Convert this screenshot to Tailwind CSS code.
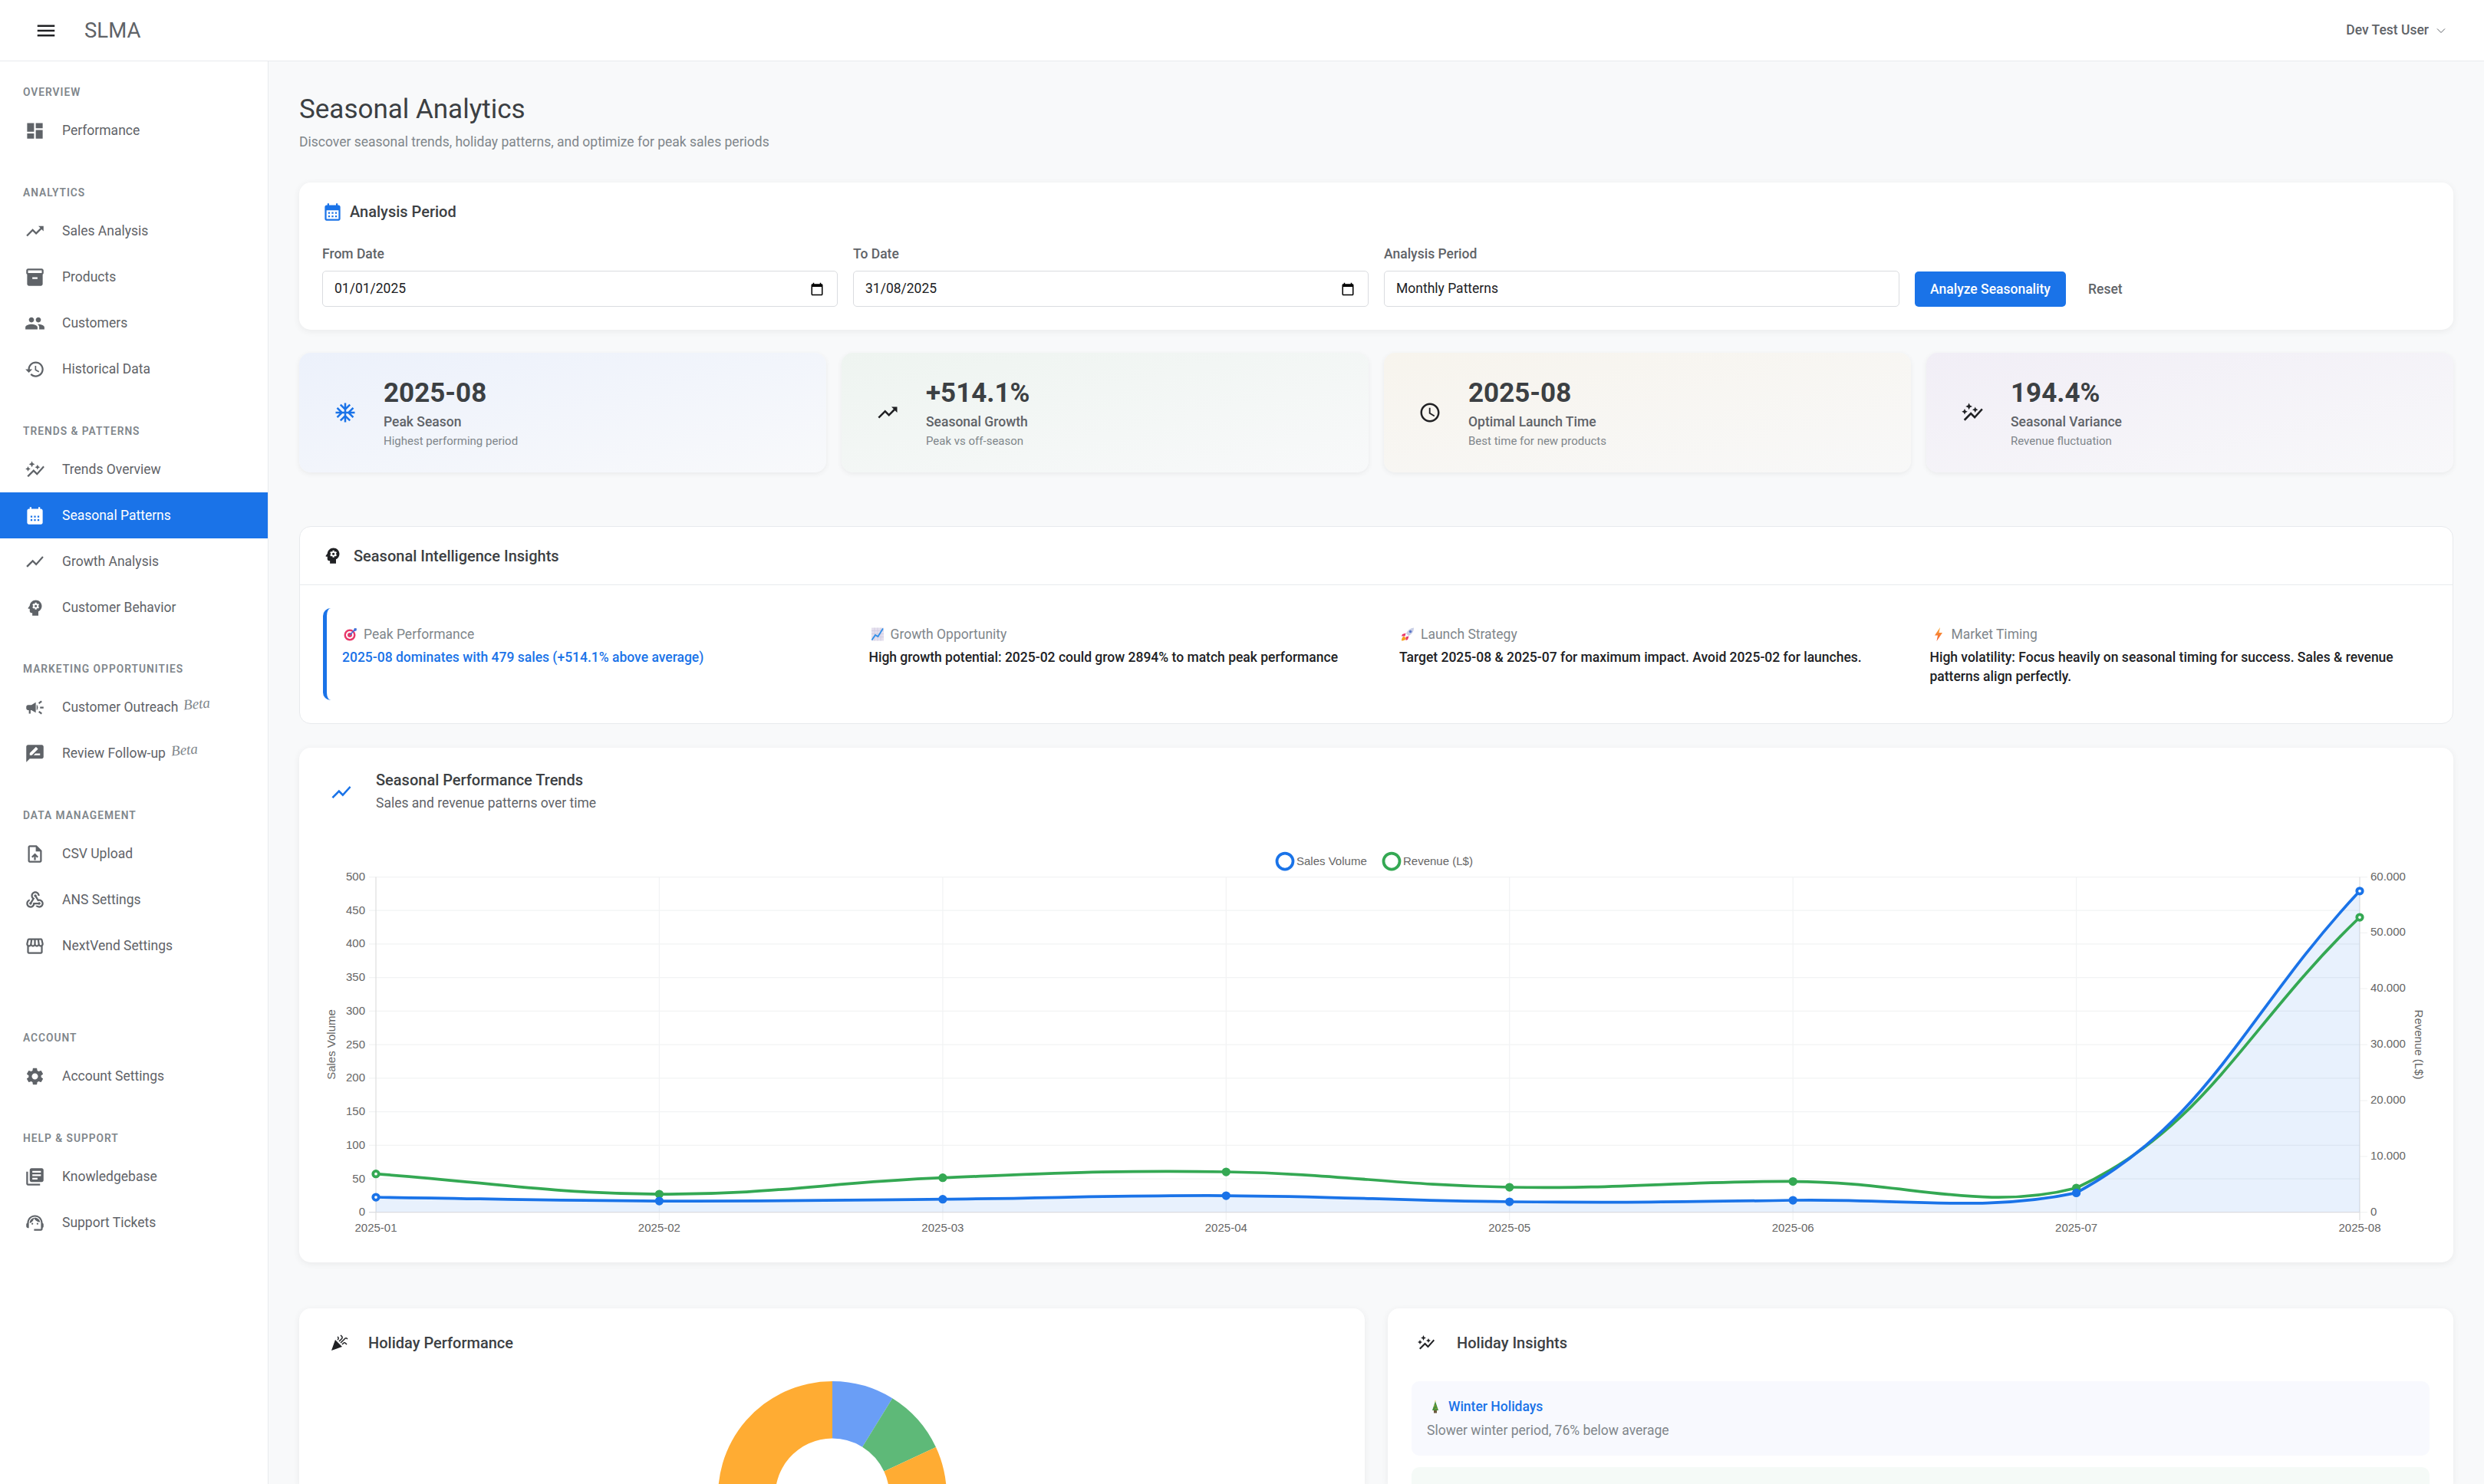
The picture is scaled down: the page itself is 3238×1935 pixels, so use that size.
<!DOCTYPE html>
<html lang="en">
<head>
<meta charset="UTF-8">
<title>SLMA - Seasonal Analytics</title>
<script src="https://cdn.jsdelivr.net/npm/@tailwindcss/browser@4"></script>
</head>
<body class="h-[1935px] overflow-hidden bg-[#f8f9fa] [font-family:Roboto,sans-serif]">

<header class="flex h-[80px] items-center justify-between border-b border-[#e8eaed] bg-white pr-[50px] pl-[45px]">
  <div class="flex items-center gap-[35px]">
    <svg class="h-[30px] w-[30px] text-[#202124]" viewBox="0 0 24 24" fill="currentColor"><path d="M3 18h18v-2H3v2zm0-5h18v-2H3v2zm0-7v2h18V6H3z"/></svg>
    <span class="text-[27.5px] text-[#5f6368]">SLMA</span>
  </div>
  <div class="flex items-center gap-[10px] text-[17.5px] font-medium text-[#5f6368]">
    Dev Test User
    <svg class="h-3 w-3" viewBox="0 0 12 12" fill="none" stroke="currentColor" stroke-width="1"><path d="M1 3.5l5 5 5-5"/></svg>
  </div>
</header>

<div class="flex h-[1855px] overflow-hidden">
  <aside class="h-[1855px] w-[350px] shrink-0 border-r border-[#e8eaed] bg-white pt-5">
    <section>
      <h6 class="flex h-10 items-center pl-[30px] text-[13.75px] font-semibold tracking-[1px] text-[#80868b] uppercase">Overview</h6>
      <a class="flex h-[60px] items-center gap-[22px] pl-[32px] text-[17.5px] text-[#5f6368]"><svg class="h-[27px] w-[27px]" viewBox="0 0 24 24" fill="currentColor"><path d="M3 13h8V3H3v10zm0 8h8v-6H3v6zm10 0h8V11h-8v10zm0-18v6h8V3h-8z"/></svg>Performance</a>
    </section>
    <section class="mt-[31px]">
      <h6 class="flex h-10 items-center pl-[30px] text-[13.75px] font-semibold tracking-[1px] text-[#80868b] uppercase">Analytics</h6>
      <a class="flex h-[60px] items-center gap-[22px] pl-[32px] text-[17.5px] text-[#5f6368]"><svg class="h-[27px] w-[27px]" viewBox="0 0 24 24" fill="currentColor"><path d="M16 6l2.29 2.29-4.88 4.88-4-4L2 16.59 3.41 18l6-6 4 4 6.3-6.29L22 12V6z"/></svg>Sales Analysis</a>
      <a class="flex h-[60px] items-center gap-[22px] pl-[32px] text-[17.5px] text-[#5f6368]"><svg class="h-[27px] w-[27px]" viewBox="0 0 24 24" fill="currentColor"><path d="M20 2H4c-1 0-2 .9-2 2v3.01c0 .72.43 1.34 1 1.69V20c0 1.1 1.1 2 2 2h14c.9 0 2-.9 2-2V8.7c.57-.35 1-.97 1-1.69V4c0-1.1-1-2-2-2zm-5 12H9v-2h6v2zm5-7H4V4l16-.02V7z"/></svg>Products</a>
      <a class="flex h-[60px] items-center gap-[22px] pl-[32px] text-[17.5px] text-[#5f6368]"><svg class="h-[27px] w-[27px]" viewBox="0 0 24 24" fill="currentColor"><path d="M16 11c1.66 0 2.99-1.34 2.99-3S17.66 5 16 5c-1.66 0-3 1.34-3 3s1.34 3 3 3zm-8 0c1.66 0 2.99-1.34 2.99-3S9.66 5 8 5C6.34 5 5 6.34 5 8s1.34 3 3 3zm0 2c-2.33 0-7 1.17-7 3.5V19h14v-2.5c0-2.33-4.67-3.5-7-3.5zm8 0c-.29 0-.62.02-.97.05 1.16.84 1.97 1.97 1.97 3.45V19h6v-2.5c0-2.33-4.67-3.5-7-3.5z"/></svg>Customers</a>
      <a class="flex h-[60px] items-center gap-[22px] pl-[32px] text-[17.5px] text-[#5f6368]"><svg class="h-[27px] w-[27px]" viewBox="0 0 24 24" fill="currentColor"><path d="M13 3c-4.97 0-9 4.03-9 9H1l3.89 3.89.07.14L9 12H6c0-3.87 3.13-7 7-7s7 3.13 7 7-3.13 7-7 7c-1.93 0-3.68-.79-4.94-2.06l-1.42 1.42C8.27 19.99 10.51 21 13 21c4.97 0 9-4.03 9-9s-4.03-9-9-9zm-1 5v5l4.28 2.54.72-1.21-3.5-2.08V8H12z"/></svg>Historical Data</a>
    </section>
    <section class="mt-[31px]">
      <h6 class="flex h-10 items-center pl-[30px] text-[13.75px] font-semibold tracking-[1px] text-[#80868b] uppercase">Trends &amp; Patterns</h6>
      <a class="flex h-[60px] items-center gap-[22px] pl-[32px] text-[17.5px] text-[#5f6368]"><svg class="h-[27px] w-[27px]" viewBox="0 0 24 24" fill="currentColor"><path d="M14.06 9.94 12 9l2.06-.94L15 6l.94 2.06L18 9l-2.06.94L15 12zM4 14l.94-2.06L7 11l-2.06-.94L4 8l-.94 2.06L1 11l2.06.94zm4.5-5 1.09-2.41L12 5.5 9.59 4.41 8.5 2 7.41 4.41 5 5.5l2.41 1.09zm-4 11.5 6-6.01 4 4L23 8.93l-1.41-1.41-7.09 7.97-4-4L3 19z"/></svg>Trends Overview</a>
      <a class="flex h-[60px] items-center gap-[22px] bg-[#1a73e8] pl-[32px] text-[17.5px] text-white"><svg class="h-[27px] w-[27px]" viewBox="0 0 24 24" fill="currentColor"><path fill-rule="evenodd" d="M19 4h-1V2h-2v2H8V2H6v2H5c-1.11 0-1.99.9-1.99 2L3 20c0 1.1.89 2 2 2h14c1.1 0 2-.9 2-2V6c0-1.1-.9-2-2-2zM9 14H7v-2h2v2zm4 0h-2v-2h2v2zm4 0h-2v-2h2v2zm-8 4H7v-2h2v2zm4 0h-2v-2h2v2zm4 0h-2v-2h2v2z"/></svg>Seasonal Patterns</a>
      <a class="flex h-[60px] items-center gap-[22px] pl-[32px] text-[17.5px] text-[#5f6368]"><svg class="h-[27px] w-[27px]" viewBox="0 0 24 24" fill="currentColor"><path d="M3.5 18.49l6-6.01 4 4L22 6.92l-1.41-1.41-7.09 7.97-4-4L2 16.99z"/></svg>Growth Analysis</a>
      <a class="flex h-[60px] items-center gap-[22px] pl-[32px] text-[17.5px] text-[#5f6368]"><svg class="h-[27px] w-[27px]" viewBox="0 0 24 24" fill="currentColor"><path d="M13 8.57c-.79 0-1.43.64-1.43 1.43s.64 1.43 1.43 1.43 1.43-.64 1.43-1.43-.64-1.43-1.43-1.43z"/><path d="M13 3C9.25 3 6.2 5.94 6.02 9.64L4.1 12.2c-.25.33-.01.8.4.8H6v3c0 1.1.9 2 2 2h1v3h7v-4.68c2.36-1.12 4-3.53 4-6.32 0-3.87-3.13-7-7-7zm3 7c0 .13-.01.26-.02.39l.83.66c.08.06.1.16.05.25l-.8 1.39c-.05.09-.16.12-.24.09l-.99-.4c-.21.16-.43.29-.67.39L14 13.83c-.01.1-.1.17-.2.17h-1.6c-.1 0-.18-.07-.2-.17l-.15-1.06c-.25-.1-.47-.23-.68-.39l-.99.4c-.09.03-.2 0-.25-.09l-.8-1.39c-.05-.08-.03-.19.05-.25l.84-.66c-.01-.13-.02-.26-.02-.39s.02-.27.04-.39l-.85-.66c-.08-.06-.1-.16-.05-.26l.8-1.38c.05-.09.15-.12.24-.09l1 .4c.2-.15.43-.29.67-.39L12 6.17c.02-.1.1-.17.2-.17h1.6c.1 0 .18.07.2.17l.15 1.06c.24.1.46.23.67.39l1-.4c.09-.03.2 0 .24.09l.8 1.38c.05.09.03.2-.05.26l-.85.66c.03.12.04.25.04.39z"/></svg>Customer Behavior</a>
    </section>
    <section class="mt-[30px]">
      <h6 class="flex h-10 items-center pl-[30px] text-[13.75px] font-semibold tracking-[1px] text-[#80868b] uppercase">Marketing Opportunities</h6>
      <a class="flex h-[60px] items-center gap-[22px] pl-[32px] text-[17.5px] text-[#5f6368]"><svg class="h-[27px] w-[27px]" viewBox="0 0 24 24" fill="currentColor"><path d="M18 11v2h4v-2h-4zm-2 6.61c.96.71 2.21 1.65 3.2 2.39.4-.53.8-1.07 1.2-1.6-.99-.74-2.24-1.68-3.2-2.4-.4.54-.8 1.08-1.2 1.61zM20.4 5.6c-.4-.53-.8-1.07-1.2-1.6-.99.74-2.24 1.68-3.2 2.4.4.53.8 1.07 1.2 1.6.96-.72 2.21-1.65 3.2-2.4zM4 9c-1.1 0-2 .9-2 2v2c0 1.1.9 2 2 2h1v4h2v-4h1l5 3V6L8 9H4zm11.5 3c0-1.33-.58-2.53-1.5-3.35v6.69c.92-.81 1.5-2.01 1.5-3.34z"/></svg><span>Customer Outreach<span class="relative -top-[4px] ml-[7px] inline-block -rotate-[5deg] text-[19px] text-[#80868b] italic [font-family:'Liberation_Serif',serif]">Beta</span></span></a>
      <a class="flex h-[60px] items-center gap-[22px] pl-[32px] text-[17.5px] text-[#5f6368]"><svg class="h-[27px] w-[27px]" viewBox="0 0 24 24" fill="currentColor"><path d="M20 2H4c-1.1 0-2 .9-2 2v18l4-4h14c1.1 0 2-.9 2-2V4c0-1.1-.9-2-2-2zM6 14v-2.47l6.88-6.88c.2-.2.51-.2.71 0l1.77 1.77c.2.2.2.51 0 .71L8.47 14H6zm12 0h-7.5l2-2H18v2z"/></svg><span>Review Follow-up<span class="relative -top-[4px] ml-[7px] inline-block -rotate-[5deg] text-[19px] text-[#80868b] italic [font-family:'Liberation_Serif',serif]">Beta</span></span></a>
    </section>
    <section class="mt-[31px]">
      <h6 class="flex h-10 items-center pl-[30px] text-[13.75px] font-semibold tracking-[1px] text-[#80868b] uppercase">Data Management</h6>
      <a class="flex h-[60px] items-center gap-[22px] pl-[32px] text-[17.5px] text-[#5f6368]"><svg class="h-[27px] w-[27px]" viewBox="0 0 24 24" fill="currentColor"><path d="M14 2H6c-1.1 0-1.99.9-1.99 2L4 20c0 1.1.89 2 1.99 2H18c1.1 0 2-.9 2-2V8l-6-6zm4 18H6V4h7v5h5v11zM8 15.01l1.41 1.41L11 14.84V19h2v-4.16l1.59 1.59L16 15.01 12.01 11 8 15.01z"/></svg>CSV Upload</a>
      <a class="flex h-[60px] items-center gap-[22px] pl-[32px] text-[17.5px] text-[#5f6368]"><svg class="h-[27px] w-[27px]" viewBox="0 0 24 24" fill="currentColor"><path d="M10 15l5.88 0c.27-.31.67-.5 1.12-.5.83 0 1.5.67 1.5 1.5s-.67 1.5-1.5 1.5c-.44 0-.84-.19-1.12-.5l-3.98 0c-.46 2.28-2.48 4-4.9 4C4.24 21 2 18.76 2 16c0-2.42 1.72-4.44 4-4.9l0 2.07C4.84 13.58 4 14.7 4 16c0 1.65 1.35 3 3 3S10 17.65 10 15zM12.5 4c1.65 0 3 1.35 3 3h2c0-2.76-2.24-5-5-5l0 0c-2.76 0-5 2.24-5 5 0 1.43.6 2.71 1.55 3.62l-2.35 3.9C6.02 14.66 5.5 15.26 5.5 16c0 .83.67 1.5 1.5 1.5s1.5-.67 1.5-1.5c0-.16-.02-.31-.07-.45l3.38-5.63C10.49 9.61 9.5 8.42 9.5 7 9.5 5.35 10.85 4 12.5 4zM17 13c-.64 0-1.23.2-1.72.54l-3.05-5.07C11.53 8.35 11 7.74 11 7c0-.83.67-1.5 1.5-1.5S14 6.17 14 7c0 .15-.02.29-.06.43l2.19 3.65C16.41 11.03 16.7 11 17 11l0 0c2.76 0 5 2.24 5 5 0 2.76-2.24 5-5 5-1.85 0-3.47-1.01-4.33-2.5l2.67 0C15.82 18.82 16.39 19 17 19c1.65 0 3-1.35 3-3S18.65 13 17 13z"/></svg>ANS Settings</a>
      <a class="flex h-[60px] items-center gap-[22px] pl-[32px] text-[17.5px] text-[#5f6368]"><svg class="h-[27px] w-[27px]" viewBox="0 0 24 24" fill="currentColor"><path d="M21.9 8.89l-1.05-4.37c-.22-.9-1-1.52-1.91-1.52H5.05c-.9 0-1.69.63-1.9 1.52L2.1 8.89c-.24 1.02-.02 2.06.62 2.88.08.11.19.19.28.29V19c0 1.1.9 2 2 2h14c1.1 0 2-.9 2-2v-6.94c.09-.09.2-.18.28-.28.64-.82.87-1.87.62-2.89zm-2.99-3.9l1.05 4.37c.1.42.01.84-.25 1.17-.14.18-.44.47-.94.47-.61 0-1.14-.49-1.21-1.14L16.98 5l1.93-.01zM13 5h1.96l.54 4.52c.05.39-.07.78-.33 1.07-.22.26-.54.41-.95.41-.67 0-1.22-.59-1.22-1.31V5zM8.49 9.52L9.04 5H11v4.69c0 .72-.55 1.31-1.29 1.31-.34 0-.65-.15-.89-.41-.25-.29-.37-.68-.33-1.07zm-4.45-.16L5.05 5h1.97l-.58 4.86c-.08.65-.6 1.14-1.21 1.14-.49 0-.8-.29-.93-.47-.27-.32-.36-.75-.26-1.17zM5 19v-6.03c.08.01.15.03.23.03.87 0 1.66-.36 2.24-.95.6.6 1.4.95 2.31.95.87 0 1.65-.36 2.23-.93.59.57 1.39.93 2.29.93.84 0 1.64-.35 2.24-.95.58.59 1.37.95 2.24.95.08 0 .15-.02.23-.03V19H5z"/></svg>NextVend Settings</a>
    </section>
    <section class="mt-[70px]">
      <h6 class="flex h-10 items-center pl-[30px] text-[13.75px] font-semibold tracking-[1px] text-[#80868b] uppercase">Account</h6>
      <a class="flex h-[60px] items-center gap-[22px] pl-[32px] text-[17.5px] text-[#5f6368]"><svg class="h-[27px] w-[27px]" viewBox="0 0 24 24" fill="currentColor"><path d="M19.14 12.94c.04-.3.06-.61.06-.94 0-.32-.02-.64-.07-.94l2.03-1.58c.18-.14.23-.41.12-.61l-1.92-3.32c-.12-.22-.37-.29-.59-.22l-2.39.96c-.5-.38-1.03-.7-1.62-.94l-.36-2.54c-.04-.24-.24-.41-.48-.41h-3.84c-.24 0-.43.17-.47.41l-.36 2.54c-.59.24-1.13.57-1.62.94l-2.39-.96c-.22-.08-.47 0-.59.22L2.74 8.87c-.12.21-.08.47.12.61l2.03 1.58c-.05.3-.09.63-.09.94s.02.64.07.94l-2.03 1.58c-.18.14-.23.41-.12.61l1.92 3.32c.12.22.37.29.59.22l2.39-.96c.5.38 1.03.7 1.62.94l.36 2.54c.05.24.24.41.48.41h3.84c.24 0 .44-.17.47-.41l.36-2.54c.59-.24 1.13-.56 1.62-.94l2.39.96c.22.08.47 0 .59-.22l1.92-3.32c.12-.22.07-.47-.12-.61l-2.01-1.58zM12 15.6c-1.98 0-3.6-1.62-3.6-3.6s1.62-3.6 3.6-3.6 3.6 1.62 3.6 3.6-1.62 3.6-3.6 3.6z"/></svg>Account Settings</a>
    </section>
    <section class="mt-[31px]">
      <h6 class="flex h-10 items-center pl-[30px] text-[13.75px] font-semibold tracking-[1px] text-[#80868b] uppercase">Help &amp; Support</h6>
      <a class="flex h-[60px] items-center gap-[22px] pl-[32px] text-[17.5px] text-[#5f6368]"><svg class="h-[27px] w-[27px]" viewBox="0 0 24 24" fill="currentColor"><path d="M4 6H2v14c0 1.1.9 2 2 2h14v-2H4V6zm16-4H8c-1.1 0-2 .9-2 2v12c0 1.1.9 2 2 2h12c1.1 0 2-.9 2-2V4c0-1.1-.9-2-2-2zm-1 9H9V9h10v2zm-4 4H9v-2h6v2zm4-8H9V5h10v2z"/></svg>Knowledgebase</a>
      <a class="flex h-[60px] items-center gap-[22px] pl-[32px] text-[17.5px] text-[#5f6368]"><svg class="h-[27px] w-[27px]" viewBox="0 0 24 24" fill="currentColor"><path d="M21 12.22C21 6.73 16.74 3 12 3c-4.69 0-9 3.65-9 9.28-.6.34-1 .98-1 1.72v2c0 1.1.9 2 2 2h1v-6.1c0-3.87 3.13-7 7-7s7 3.13 7 7V19h-8v2h8c1.1 0 2-.9 2-2v-1.22c.59-.31 1-.92 1-1.62v-2.3c0-.7-.41-1.31-1-1.64z"/><circle cx="9" cy="13" r="1"/><circle cx="15" cy="13" r="1"/><path d="M18 11.03C17.52 8.18 15.04 6 12.05 6c-3.03 0-6.29 2.51-6.03 6.45 2.47-1.01 4.33-3.21 4.86-5.89 1.31 2.63 4 4.44 7.12 4.47z"/></svg>Support Tickets</a>
    </section>
  </aside>

  <main class="min-w-0 flex-1 px-10 pt-[41px]">
    <h1 class="text-[35px] leading-[44px] text-[#3c4043]">Seasonal Analytics</h1>
    <p class="mt-[7px] text-[17.5px] leading-[26px] text-[#80868b]">Discover seasonal trends, holiday patterns, and optimize for peak sales periods</p>

    <!-- period filter -->
    <div class="mt-[40px] rounded-[15px] bg-white px-[30px] pt-[23px] pb-[30px] shadow-[0_2px_8px_rgba(60,64,67,0.08)]">
      <div class="flex h-[30px] items-center gap-[9px] text-[20px] font-medium text-[#3c4043]">
        <svg class="h-[27px] w-[27px] text-[#1a73e8]" viewBox="0 0 24 24" fill="currentColor"><path d="M19 4h-1V2h-2v2H8V2H6v2H5c-1.11 0-1.99.9-1.99 2L3 20c0 1.1.89 2 2 2h14c1.1 0 2-.9 2-2V6c0-1.1-.9-2-2-2zm0 16H5V10h14v10zM9 14H7v-2h2v2zm4 0h-2v-2h2v2zm4 0h-2v-2h2v2zm-8 4H7v-2h2v2zm4 0h-2v-2h2v2zm4 0h-2v-2h2v2z"/></svg>
        Analysis Period
      </div>
      <div class="mt-[29px] grid grid-cols-4 gap-x-5">
        <div>
          <label class="block text-[17.5px] leading-[22px] font-medium text-[#5f6368]">From Date</label>
          <div class="mt-[11px] flex h-[47px] items-center justify-between rounded-[5px] border border-[#dadce0] bg-white pr-[17px] pl-[15px] text-[17.5px] text-[#202124]">01/01/2025
            <svg class="h-[18px] w-[18px] text-black" viewBox="0 0 24 24" fill="currentColor"><path d="M20 3h-1V1h-2v2H7V1H5v2H4c-1.1 0-2 .9-2 2v16c0 1.1.9 2 2 2h16c1.1 0 2-.9 2-2V5c0-1.1-.9-2-2-2zm0 18H4V8h16v13z"/></svg>
          </div>
        </div>
        <div>
          <label class="block text-[17.5px] leading-[22px] font-medium text-[#5f6368]">To Date</label>
          <div class="mt-[11px] flex h-[47px] items-center justify-between rounded-[5px] border border-[#dadce0] bg-white pr-[17px] pl-[15px] text-[17.5px] text-[#202124]">31/08/2025
            <svg class="h-[18px] w-[18px] text-black" viewBox="0 0 24 24" fill="currentColor"><path d="M20 3h-1V1h-2v2H7V1H5v2H4c-1.1 0-2 .9-2 2v16c0 1.1.9 2 2 2h16c1.1 0 2-.9 2-2V5c0-1.1-.9-2-2-2zm0 18H4V8h16v13z"/></svg>
          </div>
        </div>
        <div>
          <label class="block text-[17.5px] leading-[22px] font-medium text-[#5f6368]">Analysis Period</label>
          <div class="mt-[11px] flex h-[47px] items-center rounded-[5px] border border-[#dadce0] bg-white pl-[15px] text-[17.5px] text-[#202124]">Monthly Patterns</div>
        </div>
        <div class="flex items-end gap-[29px]">
          <button class="h-[46px] w-[197px] rounded-[5px] bg-[#1a73e8] text-[17.5px] font-medium text-white">Analyze Seasonality</button>
          <button class="h-[46px] text-[17.5px] font-medium text-[#5f6368]">Reset</button>
        </div>
      </div>
    </div>

    <!-- kpis -->
    <div class="mt-[30px] grid h-[156px] grid-cols-4 gap-x-5">
      <div class="flex items-center gap-5 rounded-[15px] bg-linear-to-br from-[#ecf1fb] to-[#f8f9fb] pl-[30px] shadow-[0_2px_6px_rgba(60,64,67,0.08)]">
        <div class="flex w-[60px] justify-center"><svg class="h-[30px] w-[30px] text-[#1a73e8]" viewBox="0 0 24 24" fill="currentColor"><path d="M22 11h-4.17l3.24-3.24-1.41-1.42L15 11h-2V9l4.66-4.66-1.42-1.41L13 6.17V2h-2v4.17L7.76 2.93 6.34 4.34 11 9v2H9L4.34 6.34 2.93 7.76 6.17 11H2v2h4.17l-3.24 3.24 1.41 1.42L9 13h2v2l-4.66 4.66 1.42 1.41L11 17.83V22h2v-4.17l3.24 3.24 1.42-1.41L13 15v-2h2l4.66 4.66 1.41-1.42L17.83 13H22z"/></svg></div>
        <div class="pt-[2px]">
          <div class="text-[35px] leading-[44px] font-bold text-[#3c4043]">2025-08</div>
          <div class="mt-[3px] text-[17.5px] leading-[24px] font-medium text-[#5f6368]">Peak Season</div>
          <div class="mt-[1px] text-[15px] leading-[24px] text-[#80868b]">Highest performing period</div>
        </div>
      </div>
      <div class="flex items-center gap-5 rounded-[15px] bg-linear-to-br from-[#eef4f0] to-[#f8f9fa] pl-[30px] shadow-[0_2px_6px_rgba(60,64,67,0.08)]">
        <div class="flex w-[60px] justify-center"><svg class="h-[30px] w-[30px] text-[#202124]" viewBox="0 0 24 24" fill="currentColor"><path d="M16 6l2.29 2.29-4.88 4.88-4-4L2 16.59 3.41 18l6-6 4 4 6.3-6.29L22 12V6z"/></svg></div>
        <div class="pt-[2px]">
          <div class="text-[35px] leading-[44px] font-bold text-[#3c4043]">+514.1%</div>
          <div class="mt-[3px] text-[17.5px] leading-[24px] font-medium text-[#5f6368]">Seasonal Growth</div>
          <div class="mt-[1px] text-[15px] leading-[24px] text-[#80868b]">Peak vs off-season</div>
        </div>
      </div>
      <div class="flex items-center gap-5 rounded-[15px] bg-linear-to-br from-[#f7f4ed] to-[#f8f8f8] pl-[30px] shadow-[0_2px_6px_rgba(60,64,67,0.08)]">
        <div class="flex w-[60px] justify-center"><svg class="h-[30px] w-[30px] text-[#202124]" viewBox="0 0 24 24" fill="currentColor"><path d="M11.99 2C6.47 2 2 6.48 2 12s4.47 10 9.99 10C17.52 22 22 17.52 22 12S17.52 2 11.99 2zM12 20c-4.42 0-8-3.58-8-8s3.58-8 8-8 8 3.58 8 8-3.58 8-8 8zm.5-13H11v6l5.25 3.15.75-1.23-4.5-2.67z"/></svg></div>
        <div class="pt-[2px]">
          <div class="text-[35px] leading-[44px] font-bold text-[#3c4043]">2025-08</div>
          <div class="mt-[3px] text-[17.5px] leading-[24px] font-medium text-[#5f6368]">Optimal Launch Time</div>
          <div class="mt-[1px] text-[15px] leading-[24px] text-[#80868b]">Best time for new products</div>
        </div>
      </div>
      <div class="flex items-center gap-5 rounded-[15px] bg-linear-to-br from-[#f1eef6] to-[#f8f8fa] pl-[30px] shadow-[0_2px_6px_rgba(60,64,67,0.08)]">
        <div class="flex w-[60px] justify-center"><svg class="h-[30px] w-[30px] text-[#202124]" viewBox="0 0 24 24" fill="currentColor"><path d="M14.06 9.94 12 9l2.06-.94L15 6l.94 2.06L18 9l-2.06.94L15 12zM4 14l.94-2.06L7 11l-2.06-.94L4 8l-.94 2.06L1 11l2.06.94zm4.5-5 1.09-2.41L12 5.5 9.59 4.41 8.5 2 7.41 4.41 5 5.5l2.41 1.09zm-4 11.5 6-6.01 4 4L23 8.93l-1.41-1.41-7.09 7.97-4-4L3 19z"/></svg></div>
        <div class="pt-[2px]">
          <div class="text-[35px] leading-[44px] font-bold text-[#3c4043]">194.4%</div>
          <div class="mt-[3px] text-[17.5px] leading-[24px] font-medium text-[#5f6368]">Seasonal Variance</div>
          <div class="mt-[1px] text-[15px] leading-[24px] text-[#80868b]">Revenue fluctuation</div>
        </div>
      </div>
    </div>

    <!-- insights -->
    <div class="mt-[70px] h-[258px] rounded-[15px] border border-[#e8eaed] bg-white">
      <div class="flex h-[76px] items-center gap-[14px] border-b border-[#e8eaed] pl-[29px] text-[20px] font-medium text-[#3c4043]">
        <svg class="h-[27px] w-[27px] text-[#202124]" viewBox="0 0 24 24" fill="currentColor"><path d="M13 8.57c-.79 0-1.43.64-1.43 1.43s.64 1.43 1.43 1.43 1.43-.64 1.43-1.43-.64-1.43-1.43-1.43z"/><path d="M13 3C9.25 3 6.2 5.94 6.02 9.64L4.1 12.2c-.25.33-.01.8.4.8H6v3c0 1.1.9 2 2 2h1v3h7v-4.68c2.36-1.12 4-3.53 4-6.32 0-3.87-3.13-7-7-7zm3 7c0 .13-.01.26-.02.39l.83.66c.08.06.1.16.05.25l-.8 1.39c-.05.09-.16.12-.24.09l-.99-.4c-.21.16-.43.29-.67.39L14 13.83c-.01.1-.1.17-.2.17h-1.6c-.1 0-.18-.07-.2-.17l-.15-1.06c-.25-.1-.47-.23-.68-.39l-.99.4c-.09.03-.2 0-.25-.09l-.8-1.39c-.05-.08-.03-.19.05-.25l.84-.66c-.01-.13-.02-.26-.02-.39s.02-.27.04-.39l-.85-.66c-.08-.06-.1-.16-.05-.26l.8-1.38c.05-.09.15-.12.24-.09l1 .4c.2-.15.43-.29.67-.39L12 6.17c.02-.1.1-.17.2-.17h1.6c.1 0 .18.07.2.17l.15 1.06c.24.1.46.23.67.39l1-.4c.09-.03.2 0 .24.09l.8 1.38c.05.09.03.2-.05.26l-.85.66c.03.12.04.25.04.39z"/></svg>
        Seasonal Intelligence Insights
      </div>
      <div class="grid grid-cols-4 gap-x-5 pt-[30px] pr-[30px] pl-[30px]">
        <div class="h-[120px] rounded-[10px] border-l-[5px] border-[#1a73e8] px-5 pt-[21px]">
          <div class="flex h-[26px] items-center gap-[8px] pl-[2px] text-[17.5px] text-[#80868b]">
            <svg class="h-[18px] w-[18px]" viewBox="0 0 36 36"><circle cx="16" cy="20" r="15" fill="#e8386a"/><circle cx="16" cy="20" r="10" fill="#fff"/><circle cx="16" cy="20" r="6" fill="#e8386a"/><path d="M16 20L31 4" stroke="#3f6fd8" stroke-width="3"/><path d="M28 2l6 1-1 6-5 1-2-3z" fill="#3f6fd8"/></svg>
            Peak Performance
          </div>
          <div class="mt-[5px] text-[17.5px] leading-[25px] font-medium text-[#1a73e8]">2025-08 dominates with 479 sales (+514.1% above average)</div>
        </div>
        <div class="h-[120px] px-5 pt-[21px]">
          <div class="flex h-[26px] items-center gap-[8px] pl-[2px] text-[17.5px] text-[#80868b]">
            <svg class="h-[18px] w-[18px]" viewBox="0 0 36 36"><rect x="2" y="1" width="32" height="34" fill="#e4dfee"/><path d="M2 9h32M2 17h32M2 25h32M10 1v34M18 1v34M26 1v34" stroke="#cfc8df" stroke-width="1.5"/><path d="M3 33l9-13 7 4 13-21" fill="none" stroke="#2f8ee8" stroke-width="3.5"/></svg>
            Growth Opportunity
          </div>
          <div class="mt-[5px] text-[17.5px] leading-[25px] font-medium text-[#202124]">High growth potential: 2025-02 could grow 2894% to match peak performance</div>
        </div>
        <div class="h-[120px] px-5 pt-[21px]">
          <div class="flex h-[26px] items-center gap-[8px] pl-[2px] text-[17.5px] text-[#80868b]">
            <svg class="h-[18px] w-[18px]" viewBox="0 0 36 36"><path d="M34 1c-9 1-16 6-20 15l6 6c9-4 14-11 14-21z" fill="#c9cfe6"/><circle cx="25" cy="11" r="3.5" fill="#5b76c9"/><path d="M13 15l-9 3-2 5 9 0zM21 23l-3 9-5 2 0-9z" fill="#e8386a"/><path d="M8 23c-4 2-6 6-6 12 6 0 10-2 12-6z" fill="#f6a01e"/></svg>
            Launch Strategy
          </div>
          <div class="mt-[5px] text-[17.5px] leading-[25px] font-medium text-[#202124]">Target 2025-08 &amp; 2025-07 for maximum impact. Avoid 2025-02 for launches.</div>
        </div>
        <div class="h-[120px] px-5 pt-[21px]">
          <div class="flex h-[26px] items-center gap-[8px] pl-[2px] text-[17.5px] text-[#80868b]">
            <svg class="h-[18px] w-[18px]" viewBox="0 0 36 36"><defs><linearGradient id="bolt" x1="0" y1="0" x2="0" y2="1"><stop offset="0" stop-color="#fbb03b"/><stop offset="1" stop-color="#f2542d"/></linearGradient></defs><path d="M22 0L8 21h8l-3 15 15-22h-9z" fill="url(#bolt)"/></svg>
            Market Timing
          </div>
          <div class="mt-[5px] text-[17.5px] leading-[25px] font-medium text-[#202124]">High volatility: Focus heavily on seasonal timing for success. Sales &amp; revenue patterns align perfectly.</div>
        </div>
      </div>
    </div>

    <!-- trend chart -->
    <div class="mt-[31px] h-[671px] rounded-[15px] bg-white shadow-[0_2px_8px_rgba(60,64,67,0.08)]">
      <div class="flex h-[125px] items-start gap-[30px] pt-[27px] pl-[40px]">
        <svg class="mt-[16px] h-[30px] w-[30px] text-[#1a73e8]" viewBox="0 0 24 24" fill="currentColor"><path d="M3.5 18.49l6-6.01 4 4L22 6.92l-1.41-1.41-7.09 7.97-4-4L2 16.99z"/></svg>
        <div>
          <div class="text-[20px] leading-[30px] font-medium text-[#3c4043]">Seasonal Performance Trends</div>
          <div class="text-[17.5px] leading-[30px] text-[#5f6368]">Sales and revenue patterns over time</div>
        </div>
      </div>
      <svg class="block" width="2808" height="546" viewBox="390 1100 2808 546" font-family="Liberation Sans, sans-serif" font-size="15" fill="#666">
        <g stroke="#f2f3f4" stroke-width="1.25" fill="none">
          <path d="M481 1143.5H3076M481 1187.2H3076M481 1230.9H3076M481 1274.7H3076M481 1318.4H3076M481 1362.1H3076M481 1405.8H3076M481 1449.5H3076M481 1493.3H3076M481 1537H3076"/>
          <path d="M859.4 1143.5V1591M1228.9 1143.5V1591M1598.3 1143.5V1591M1967.7 1143.5V1591M2337.2 1143.5V1591M2706.6 1143.5V1591"/>
          <path d="M3076 1143.5H3086M3076 1216.4H3086M3076 1289.2H3086M3076 1362.1H3086M3076 1435H3086M3076 1507.8H3086M3076 1580.7H3086"/>
        </g>
        <path d="M490 1143.5V1591M3076 1143.5V1591" stroke="#e0e0e0" stroke-width="1.25" fill="none"/>
        <path id="area" fill="#1a73e8" fill-opacity="0.1"/>
        <path d="M481 1580.7H3076" stroke="#dadce0" stroke-width="1.25" fill="none"/>
        <path id="line-rev" fill="none" stroke="#34a853" stroke-width="3.75"/>
        <path id="line-sales" fill="none" stroke="#1a73e8" stroke-width="3.75"/>

        <g fill="#34a853" stroke="#34a853" stroke-width="3.75">
          <circle cx="490" cy="1530.7" r="3.75" fill="#fff"/><circle cx="859.4" cy="1557" r="3.75"/><circle cx="1228.9" cy="1535.7" r="3.75"/><circle cx="1598.3" cy="1528" r="3.75"/><circle cx="1967.7" cy="1548" r="3.75"/><circle cx="2337.2" cy="1540.5" r="3.75"/><circle cx="2706.6" cy="1549" r="3.75"/><circle cx="3076" cy="1196" r="3.75" fill="#fff"/>
        </g>
        <g fill="#1a73e8" stroke="#1a73e8" stroke-width="3.75">
          <circle cx="490" cy="1561" r="3.75" fill="#fff"/><circle cx="859.4" cy="1566" r="3.75"/><circle cx="1228.9" cy="1563.7" r="3.75"/><circle cx="1598.3" cy="1559" r="3.75"/><circle cx="1967.7" cy="1567" r="3.75"/><circle cx="2337.2" cy="1565" r="3.75"/><circle cx="2706.6" cy="1555.4" r="3.75"/><circle cx="3076" cy="1161.8" r="3.75" fill="#fff"/>
        </g>

        <circle cx="1675" cy="1123" r="10.5" fill="#fff" stroke="#1a73e8" stroke-width="3.75"/>
        <text x="1690" y="1128">Sales Volume</text>
        <circle cx="1814" cy="1123" r="10.5" fill="#fff" stroke="#34a853" stroke-width="3.75"/>
        <text x="1829" y="1128">Revenue (L$)</text>

        <g text-anchor="end">
          <text x="476" y="1148">500</text><text x="476" y="1191.7">450</text><text x="476" y="1235.4">400</text><text x="476" y="1279.2">350</text><text x="476" y="1322.9">300</text><text x="476" y="1366.6">250</text><text x="476" y="1410.3">200</text><text x="476" y="1454">150</text><text x="476" y="1497.8">100</text><text x="476" y="1541.5">50</text><text x="476" y="1585.2">0</text>
        </g>
        <g>
          <text x="3090" y="1148">60.000</text><text x="3090" y="1220.4">50.000</text><text x="3090" y="1293.2">40.000</text><text x="3090" y="1366.1">30.000</text><text x="3090" y="1439">20.000</text><text x="3090" y="1511.8">10.000</text><text x="3090" y="1584.7">0</text>
        </g>
        <g text-anchor="middle">
          <text x="490" y="1606">2025-01</text><text x="859.4" y="1606">2025-02</text><text x="1228.9" y="1606">2025-03</text><text x="1598.3" y="1606">2025-04</text><text x="1967.7" y="1606">2025-05</text><text x="2337.2" y="1606">2025-06</text><text x="2706.6" y="1606">2025-07</text><text x="3076" y="1606">2025-08</text>
          <text transform="translate(437 1362) rotate(-90)">Sales Volume</text>
          <text transform="translate(3148 1362) rotate(90)">Revenue (L$)</text>
        </g>
      </svg>
    </div>

    <!-- holiday -->
    <div class="mt-[60px] grid h-[229px] grid-cols-2 gap-x-[30px]">
      <div class="overflow-hidden rounded-t-[15px] bg-white pt-[30px] shadow-[0_2px_8px_rgba(60,64,67,0.08)]">
        <div class="flex h-[30px] items-center gap-[26px] pl-[40px] text-[20px] font-medium text-[#3c4043]">
          <svg class="h-[24px] w-[24px] text-[#202124]" viewBox="0 0 24 24" fill="currentColor"><path d="M2 22l14-5-9-9z"/><path d="M14.53 12.53l5.59-5.59c.49-.49 1.28-.49 1.77 0l.59.59 1.06-1.06-.59-.59c-1.07-1.07-2.82-1.07-3.89 0l-5.59 5.59 1.06 1.06zM10.06 6.88l-.59.59 1.06 1.06.59-.59c1.07-1.07 1.07-2.82 0-3.89l-.59-.59-1.06 1.07.59.59c.48.48.48 1.28 0 1.76zM17.06 11.88l-1.59 1.59 1.06 1.06 1.59-1.59c.49-.49 1.28-.49 1.77 0l1.61 1.61 1.06-1.06-1.61-1.61c-1.08-1.07-2.82-1.07-3.89 0zM15.06 5.88l-3.59 3.59 1.06 1.06 3.59-3.59c1.07-1.07 1.07-2.82 0-3.89l-1.59-1.59-1.06 1.06 1.59 1.59c.48.49.48 1.29 0 1.77z"/></svg>
          Holiday Performance
        </div>
        <svg class="mx-auto mt-[35px] block" width="298" height="298" viewBox="-149 -149 298 298">
          <path d="M0 -149A149 149 0 0 1 78.3 -126.8L39.1 -63.3A74.4 74.4 0 0 0 0 -74.4Z" fill="#6a9ef6"/>
          <path d="M78.3 -126.8A149 149 0 0 1 135 -63L67.4 -31.4A74.4 74.4 0 0 0 39.1 -63.3Z" fill="#5eb978"/>
          <path d="M135 -63A149 149 0 1 1 0 -149L0 -74.4A74.4 74.4 0 1 0 67.4 -31.4Z" fill="#ffac33"/>
        </svg>
      </div>
      <div class="overflow-hidden rounded-t-[15px] bg-white px-[31px] pt-[30px] shadow-[0_2px_8px_rgba(60,64,67,0.08)]">
        <div class="flex h-[30px] items-center gap-[28px] pl-[7px] text-[20px] font-medium text-[#3c4043]">
          <svg class="h-[24px] w-[24px] text-[#202124]" viewBox="0 0 24 24" fill="currentColor"><path d="M14.06 9.94 12 9l2.06-.94L15 6l.94 2.06L18 9l-2.06.94L15 12zM4 14l.94-2.06L7 11l-2.06-.94L4 8l-.94 2.06L1 11l2.06.94zm4.5-5 1.09-2.41L12 5.5 9.59 4.41 8.5 2 7.41 4.41 5 5.5l2.41 1.09zm-4 11.5 6-6.01 4 4L23 8.93l-1.41-1.41-7.09 7.97-4-4L3 19z"/></svg>
          Holiday Insights
        </div>
        <div class="mt-[35px] h-[97px] rounded-[10px] bg-[#f8f9fe] px-5 pt-[20px]">
          <div class="flex h-[26px] items-center gap-[10px] pl-[4px] text-[17.5px] font-medium text-[#1a73e8]">
            <svg class="h-[18px] w-[14px]" viewBox="0 0 28 36"><path d="M14 1l1.5 4h-3z" fill="#f7d038"/><path d="M14 4L22 28H6z" fill="#4b8f3a"/><circle cx="12" cy="16" r="1.5" fill="#d9b430"/><circle cx="16" cy="23" r="1.5" fill="#c9a02a"/><rect x="10" y="28" width="8" height="7" fill="#6b5a3e"/></svg>
            Winter Holidays
          </div>
          <div class="mt-[5px] text-[17.5px] leading-[26px] text-[#80868b]">Slower winter period, 76% below average</div>
        </div>
        <div class="mt-[15px] h-[97px] rounded-[10px] bg-[#f5faf7]"></div>
      </div>
    </div>
  </main>
</div>

<script>
// chart.js style bezier (tension .4), control points capped to the chart area
const xs = [490, 859.4, 1228.9, 1598.3, 1967.7, 2337.2, 2706.6, 3076]
const sales = [1561, 1566, 1563.7, 1559, 1567, 1565, 1555.4, 1161.8]
const revenue = [1530.7, 1557, 1535.7, 1528, 1548, 1540.5, 1549, 1196]
const areaTop = 1143.5, areaBottom = 1580.7

function spline(ys) {
  const pts = xs.map((x, i) => [x, ys[i]])
  const dist = (a, b) => Math.hypot(a[0] - b[0], a[1] - b[1])
  const cap = y => Math.min(areaBottom, Math.max(areaTop, y))
  const ctrl = pts.map((p, i) => {
    const prev = pts[i - 1] || p, next = pts[i + 1] || p
    const d1 = dist(prev, p), d2 = dist(p, next), sum = d1 + d2 || 1
    const f1 = 0.4 * d1 / sum, f2 = 0.4 * d2 / sum
    return [
      [p[0] - f1 * (next[0] - prev[0]), cap(p[1] - f1 * (next[1] - prev[1]))],
      [p[0] + f2 * (next[0] - prev[0]), cap(p[1] + f2 * (next[1] - prev[1]))]
    ]
  })
  let d = `M${pts[0][0]} ${pts[0][1]}`
  for (let i = 1; i < pts.length; i++) {
    d += `C${ctrl[i - 1][1].join(' ')} ${ctrl[i][0].join(' ')} ${pts[i].join(' ')}`
  }
  return d
}

document.getElementById('line-sales').setAttribute('d', spline(sales))
document.getElementById('line-rev').setAttribute('d', spline(revenue))
document.getElementById('area').setAttribute('d', spline(sales) + 'V1580.7H490Z')
</script>
</body>
</html>
